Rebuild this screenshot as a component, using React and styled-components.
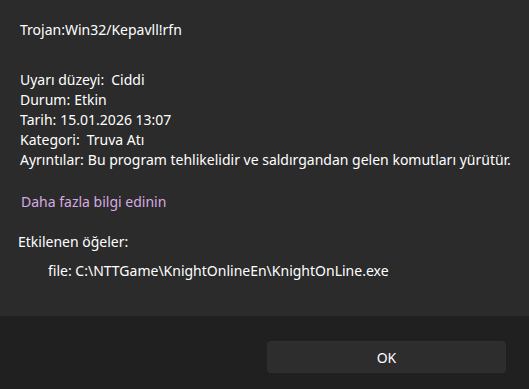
import React from "react";
import styled, { createGlobalStyle } from "styled-components";

const Global = createGlobalStyle`
  html, body { margin: 0; padding: 0; background: #2b2b2b; }
  body { font-family: "Noto Sans", "Open Sans", sans-serif; }
`;

const Window = styled.div`
  width: 529px;
  height: 389px;
  display: flex;
  flex-direction: column;
  background: #2b2b2b;
  color: #ffffff;
  font-size: 14px;
  line-height: 20px;
`;

const Content = styled.div`
  flex: 1;
  display: flex;
  flex-direction: column;
  padding: 20px 0 0 20px;
`;

const Title = styled.div`
  margin-bottom: 30px;
`;

const InfoList = styled.div`
  display: flex;
  flex-direction: column;
  margin-bottom: 22px;
`;

const InfoLine = styled.div`
  white-space: nowrap;
`;

const Label = styled.span`
  margin-right: ${(p) => (p.$wide ? "7px" : "4px")};
`;

const Link = styled.a`
  color: #d8aae2;
  text-decoration: none;
  margin-left: 1px;
  margin-bottom: 20px;
  align-self: flex-start;
  cursor: pointer;
`;

const Section = styled.div`
  margin-left: -2px;
  margin-bottom: 9px;
`;

const FileLine = styled.div`
  margin-left: 28px;
`;

const Footer = styled.div`
  height: 73px;
  background: #202020;
  display: flex;
  justify-content: flex-end;
  align-items: flex-start;
  padding: 25px 23px 0 0;
  box-sizing: border-box;
`;

const Button = styled.button`
  width: 239px;
  height: 32px;
  background: #2d2d2d;
  border: 1px solid #303030;
  border-radius: 4px;
  color: #ffffff;
  font-family: inherit;
  font-size: 14px;
  cursor: pointer;
`;

export default function App() {
  return (
    <>
      <Global />
      <Window>
        <Content>
          <Title>Trojan:Win32/Kepavll!rfn</Title>
          <InfoList>
            <InfoLine><Label $wide>Uyarı düzeyi:</Label>Ciddi</InfoLine>
            <InfoLine><Label>Durum:</Label>Etkin</InfoLine>
            <InfoLine><Label>Tarih:</Label>15.01.2026 13:07</InfoLine>
            <InfoLine><Label $wide>Kategori:</Label>Truva Atı</InfoLine>
            <InfoLine><Label>Ayrıntılar:</Label>Bu program tehlikelidir ve saldırgandan gelen komutları yürütür.</InfoLine>
          </InfoList>
          <Link>Daha fazla bilgi edinin</Link>
          <Section>Etkilenen öğeler:</Section>
          <FileLine>file: C:\NTTGame\KnightOnlineEn\KnightOnLine.exe</FileLine>
        </Content>
        <Footer>
          <Button>OK</Button>
        </Footer>
      </Window>
    </>
  );
}
